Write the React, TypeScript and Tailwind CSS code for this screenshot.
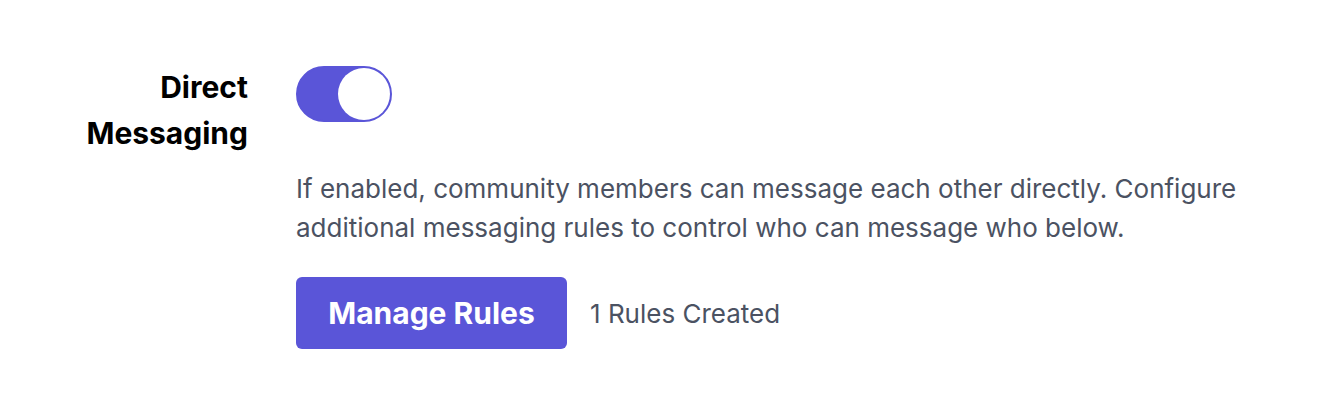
export default function App() {
  return (
    <main className="min-h-screen bg-white" style={{ fontFamily: "Inter, 'Noto Sans', sans-serif" }}>
      <div className="flex pt-[66px] pl-[80px]">
        <div className="w-[168px] text-right text-[30px] font-bold leading-[46px] text-black -mt-[2px]">
          Direct
          <br />
          Messaging
        </div>
        <div className="ml-[48px] flex flex-col">
          <button className="flex h-[56px] w-[96px] items-center justify-end rounded-full border-2 border-[#5a55d8] bg-[#5a55d8] p-0">
            <span className="block h-[52px] w-[52px] rounded-full bg-white" />
          </button>
          <p className="mt-[47px] text-[26px] leading-[39px] text-[#4b5262]">
            If enabled, community members can message each other directly. Configure
            <br />
            additional messaging rules to control who can message who below.
          </p>
          <div className="mt-[30px] flex items-center gap-[23px]">
            <button className="h-[72px] w-[271px] rounded-md bg-[#5a55d8] text-[30px] font-bold text-white">
              Manage Rules
            </button>
            <span className="text-[26px] text-[#4b5262]">1 Rules Created</span>
          </div>
        </div>
      </div>
    </main>
  )
}
